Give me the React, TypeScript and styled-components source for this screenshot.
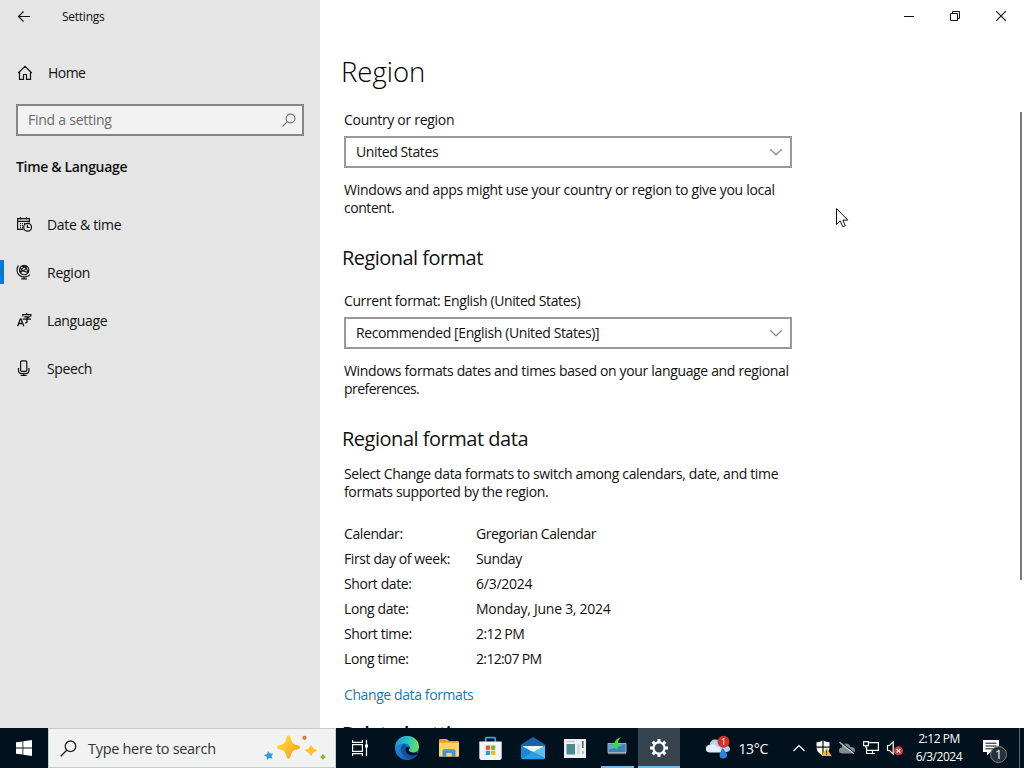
import React from "react";
import styled, { createGlobalStyle } from "styled-components";

interface TextProps {
  $track?: number;
}

const GlobalStyle = createGlobalStyle`
  * {
    box-sizing: border-box;
  }
  body {
    margin: 0;
    overflow: hidden;
    background-color: #fff;
    font-family: "Open Sans", "Noto Sans", sans-serif;
    font-size: 14px;
    color: #111;
  }
  h1, h2, p, dl, dt, dd {
    margin: 0;
    font-weight: 400;
  }
  svg {
    display: block;
    flex: none;
  }
`;

const Screen = styled.div`
  width: 1024px;
  height: 768px;
  display: flex;
  flex-direction: column;
  overflow: hidden;
`;

const SettingsWindow = styled.div`
  height: 728px;
  display: flex;
`;

const Label = styled.span<TextProps>`
  white-space: nowrap;
  letter-spacing: ${({ $track = 0 }) => $track}px;
`;

/* ---------- sidebar ---------- */

const Sidebar = styled.aside`
  width: 320px;
  background-color: #e5e5e5;
`;

const TitleBar = styled.div`
  height: 33px;
  padding-left: 17px;
  display: flex;
  align-items: center;
  gap: 31px;
  font-size: 12px;
`;

const HomeRow = styled.div`
  height: 32px;
  margin-top: 24px;
  padding-left: 17px;
  display: flex;
  align-items: center;
  gap: 15px;

  span {
    padding-bottom: 2px;
  }
`;

const SearchBox = styled.div`
  width: 288px;
  height: 32px;
  margin: 15px 16px 0;
  padding: 0 5px 2px 10px;
  border: 2px solid #858585;
  background-color: #f2f2f2;
  color: #6b6b6b;
  display: flex;
  align-items: center;
  justify-content: space-between;

  svg {
    margin-top: 2px;
  }
`;

const Category = styled.div`
  height: 65px;
  padding: 21px 16px 0;
  font-weight: 600;
  line-height: 20px;
`;

const NavItem = styled.div<{ $active?: boolean }>`
  height: 48px;
  display: flex;
  align-items: center;

  &::before {
    content: "";
    width: 4px;
    height: 24px;
    margin-right: 12px;
    margin-top: -2px;
    background-color: ${({ $active }) => ($active ? "#0078d7" : "transparent")};
  }
  svg {
    margin: -2px 15px 0 0;
  }
  span {
    padding-bottom: 2px;
  }
`;

/* ---------- content ---------- */

const Content = styled.main`
  flex: 1;
  display: flex;
  flex-direction: column;
`;

const Caption = styled.div`
  height: 32px;
  display: flex;
  justify-content: flex-end;
`;

const CaptionButton = styled.div`
  width: 46px;
  display: flex;
  align-items: center;
  justify-content: center;
`;

const Body = styled.div`
  flex: 1;
  display: flex;
  justify-content: space-between;
  min-height: 0;
`;

const Page = styled.div`
  width: 480px;
  padding-left: 24px;
  overflow: hidden;
`;

const PageTitle = styled.h1`
  margin: 20px 0 0 -3px;
  font-size: 27.5px;
  font-weight: 300;
  line-height: 40px;
  color: #000;
`;

const SectionTitle = styled.h2<{ $gap: number; $bold?: boolean }>`
  margin: ${({ $gap }) => $gap}px 0 0 -2px;
  font-size: 20px;
  line-height: 28px;
  font-weight: ${({ $bold }) => ($bold ? 600 : 400)};
`;

const Line = styled.p<{ $gap?: number }>`
  margin-top: ${({ $gap = 0 }) => $gap}px;
  height: 18px;
  line-height: 19px;
`;

const Select = styled.div`
  width: 448px;
  height: 32px;
  margin-top: 8px;
  padding: 0 7px 0 10px;
  border: 2px solid #999;
  display: flex;
  align-items: center;
  justify-content: space-between;

  span {
    padding-bottom: 2px;
  }
`;

const FormatList = styled.dl`
  margin-top: 21px;
`;

const FormatRow = styled.div`
  height: 25px;
  display: grid;
  grid-template-columns: 132px 1fr;
  line-height: 26px;
`;

const LinkLine = styled(Line)`
  color: #1a77ba;
`;

const ScrollThumb = styled.div`
  width: 2px;
  height: 468px;
  margin: 80px 2px 0 0;
  background-color: #7a7a7a;
`;

const Pointer = styled.svg`
  position: absolute;
  left: 836px;
  top: 207px;
`;

/* ---------- taskbar ---------- */

const Taskbar = styled.footer`
  height: 40px;
  background-color: #01111d;
  color: #fff;
  display: flex;
`;

const TaskSlot = styled.div<{ $width?: number; $active?: boolean }>`
  width: ${({ $width = 42 }) => $width}px;
  display: flex;
  align-items: center;
  justify-content: center;
  background-color: ${({ $active }) => ($active ? "#36444f" : "transparent")};
`;

const RunningSlot = styled(TaskSlot)<{ $line: number }>`
  background-image: linear-gradient(#76b9ed, #76b9ed);
  background-repeat: no-repeat;
  background-position: center bottom;
  background-size: ${({ $line }) => $line}px 2px;
`;

const TaskSearch = styled.div`
  width: 288px;
  padding: 0 8px 0 11px;
  border: 1px solid #c3ccd1;
  background-color: #f2f2f2;
  color: #333;
  font-size: 14.5px;
  display: flex;
  align-items: center;

  span {
    flex: 1;
    margin-left: 11px;
  }
`;

const Tray = styled.div`
  margin-left: auto;
  display: flex;
  align-items: center;
`;

const Weather = styled.div`
  display: flex;
  align-items: center;
  gap: 7px;
  margin-right: 24px;
`;

const TrayIcons = styled.div`
  display: flex;
  align-items: center;
  gap: 6px;
`;

const Clock = styled.div`
  width: 60px;
  margin: -1px 13px 0 5px;
  font-size: 12px;
  line-height: 18px;
  display: flex;
  flex-direction: column;
  align-items: center;
`;

const ShowDesktop = styled.div`
  width: 5px;
  height: 40px;
  margin-left: 10px;
  border-left: 1px solid #5b6670;
`;

/* ---------- icons ---------- */

interface IconProps {
  w?: number;
  h?: number;
  color?: string;
  stroke?: number;
  children: React.ReactNode;
}

const Icon: React.FC<IconProps> = ({ w = 16, h = 16, color = "#111", stroke = 1.2, children }) => (
  <svg width={w} height={h} viewBox={`0 0 ${w} ${h}`} fill="none" stroke={color} strokeWidth={stroke}>
    {children}
  </svg>
);

const BackIcon = () => (
  <Icon w={14} h={14}>
    <path d="M1.5 6.5H13M6.5 1.5l-5 5 5 5" />
  </Icon>
);

const HomeIcon = () => (
  <Icon>
    <path d="M1.2 8 8 1.3 14.8 8M2.5 7v7.4h4V9.5h3v4.9h4V7" />
  </Icon>
);

const FindIcon = () => (
  <Icon color="#777">
    <circle cx="9.5" cy="6.5" r="4.4" />
    <path d="M6.3 9.7 1.5 14.5" />
  </Icon>
);

const DateIcon = () => (
  <Icon>
    <path d="M7.5 13.4H1.6V2.6h11.8v4M1.6 5.3h11.8M4.5 1v2.5M10.5 1v2.5" />
    <path d="M4 7.7h5M4 9.7h4M4 11.6h3" strokeDasharray="1 1" />
    <circle cx="11.6" cy="11.2" r="3.9" />
    <path d="M11.4 8.8v2.7h2.2" />
  </Icon>
);

const RegionIcon = () => (
  <Icon stroke={1.1}>
    <circle cx="8.2" cy="6" r="4.700" />
    <path d="M4.200 3.800c2 3.200 5.200 4.800 8.600 4.200M4.900 9.400C4.500 6 6.900 2.600 10.800 2.300M5.700 2.100c3.600 0 6.200 3 6 6.600M3.600 7.200c2.700.9 6.900-1.500 7.700-4.800M2.400 1.400C.1 5 .7 9.400 3.600 11.500c3.200 2.200 7.600 1.800 10.400-.8M8 12.800v2M5.200 14.900h5.800" />
  </Icon>
);

const LanguageIcon = () => (
  <Icon stroke={1.3}>
    <path d="m1.6 14.3 2.8-7.5h.6l2.8 7.5M2.7 11.5h4M6.8 4.5V2.6h8v1.9M10.7 1v1.6M8.3 4.8h4.8l-2.2 1.6v3.7q0 .9-1.8.7M6.7 7.2h8.3" />
  </Icon>
);

const SpeechIcon = () => (
  <Icon>
    <rect x="4.6" y="0.8" width="6.2" height="10.6" rx="1.2" />
    <path d="M2.5 8v2.6q0 3.1 3.1 3.1h4.2q3.1 0 3.1-3.1V8M7.7 13.7v2M4.7 15.6h6" />
  </Icon>
);

const ChevronIcon = () => (
  <Icon w={14} h={8} color="#8a8a8a">
    <path d="m1.2 1.2 5.8 5.6 5.8-5.6" />
  </Icon>
);

const WindowsLogo = () => (
  <svg width="16" height="16" viewBox="0 0 16 16" fill="#fff">
    <path d="M0 2.3 6.5 1.4v6.2H0zM7.3 1.2 16 0v7.6H7.3zM0 8.4h6.5v6.2L0 13.7zM7.3 8.4H16V16l-8.7-1.2z" />
  </svg>
);

const Sparkles = () => (
  <svg width="64" height="30" viewBox="0 0 64 30">
    <defs>
      <linearGradient id="gold" x1="0" y1="0" x2="1" y2="1">
        <stop offset="0.2" stopColor="#ffd633" />
        <stop offset="1" stopColor="#f59a1c" />
      </linearGradient>
    </defs>
    <path d="M25.5 2.5q2 0 2.4 3.5 1 5.3 5.8 6 3.3.4 3.3 2.200t-3.300 2.200q-4.800.7-5.800 5.600-.4 3.500-2.400 3.500T23.100 22q-1-4.900-5.800-5.600-3.300-.4-3.300-2.200t3.300-2.200q4.800-.7 5.800-6 .4-3.500 2.400-3.500z" fill="url(#gold)" />
    <path d="M48 12.500q1.200 4 5.500 5-4.300 1-5.500 5-1.200-4-5.500-5 4.300-1 5.500-5z" fill="#fbc126" stroke="#fbc126" strokeLinejoin="round" />
    <path d="m5 18 2 2.600 3-.2-1.400 2.500 1 2.900-3.200-.8-2.500 2-.2-3.200-2.600-1.500 3-1.200z" fill="#279fda" />
    <circle cx="41.5" cy="4.8" r="2.1" fill="#e4733f" />
    <path d="M60 21.500q.6 1.800 2.300 2.400-1.700.6-2.300 2.400-.6-1.800-2.300-2.400 1.700-.6 2.300-2.400z" fill="#7bb83c" stroke="#7bb83c" />
  </svg>
);

const TaskViewIcon = () => (
  <Icon w={20} h={18} color="#fff">
    <path d="M1.600 1v2.400h9.800V1M1.600 17v-2.400h9.800V17M1.600 5.600h9.800v6.800H1.600zM15.500 1v16" />
    <rect x="14" y="5.5" width="3" height="3" fill="#fff" stroke="none" />
  </Icon>
);

const EdgeIcon = () => (
  <svg width="26" height="26" viewBox="0 0 26 26">
    <defs>
      <linearGradient id="edgeTop" x1="0" y1="0.4" x2="1" y2="0.5">
        <stop offset="0" stopColor="#1798df" />
        <stop offset="0.5" stopColor="#2bc3c2" />
        <stop offset="1" stopColor="#6de052" />
      </linearGradient>
      <linearGradient id="edgeLow" x1="0" y1="0" x2="1" y2="1">
        <stop offset="0" stopColor="#1b9de2" />
        <stop offset="1" stopColor="#0c55ab" />
      </linearGradient>
    </defs>
    <circle cx="13" cy="13" r="12" fill="url(#edgeLow)" />
    <path d="M1.2 11.5C2.2 5 7 1 13 1c7 0 12 5 12 10.5 0 4-3 6-6.300 6-3 0-4.700-1-3.400-2.700 2-3-.3-6.300-4.600-6.300-4.200 0-8 1.300-9.500 3z" fill="url(#edgeTop)" />
    <path d="M10.500 8.500c-3.800 1.500-4.700 6-2.600 10 2 3.800 6 5.500 9.600 5.500 2.500-.8 4.600-2.500 6-4.800-3.600 1.700-8 1.300-10.200-1-2-2-1.800-4.700-.2-6.400z" fill="#12509d" />
    <path d="M11.800 13c1-1.400 3-1.500 3.700-.5.300 1-.9 2-.7 3 .5 1.700 4 3 8.900 1.800l-.8 2.300c-3.500 1.500-7.500 1-9.700-1-1.600-1.600-2-3.900-1.400-5.600z" fill="#01111d" />
  </svg>
);

const FolderIcon = () => (
  <svg width="22" height="20" viewBox="0 0 22 20">
    <path d="M1 2q0-1 1-1h7l2 2h9q1 0 1 1v4H1z" fill="#e2a322" />
    <path d="M1 4.800h20V18q0 .8-.8.800H1.800Q1 18.800 1 18z" fill="#ffd568" />
    <path d="M4.500 18.800v-6q0-1.800 1.800-1.800h9.400q1.800 0 1.800 1.800v6h-3.800V15H8.300v3.800z" fill="#3d91d4" />
    <path d="M5 12h12" stroke="#66b9e8" />
  </svg>
);

const StoreIcon = () => (
  <svg width="24" height="25" viewBox="0 0 24 25">
    <path d="M6.700 6V2.700q0-1 1-1h7.600q1 0 1 1V6" fill="none" stroke="#32a6da" strokeWidth="1.7" />
    <path d="M.3 5.500h22.400v15.700q0 2.800-2.800 2.800H3.100Q.3 24 .3 21.200z" fill="#f4f5f6" />
    <path d="M6.800 9.500h4.300v4.300H6.800z" fill="#e9522c" />
    <path d="M12 9.500h4.300v4.300H12z" fill="#79b52a" />
    <path d="M6.800 14.700h4.300V19H6.800z" fill="#229ddd" />
    <path d="M12 14.700h4.300V19H12z" fill="#f7b519" />
  </svg>
);

const MailIcon = () => (
  <svg width="26" height="24" viewBox="0 0 26 24">
    <path d="M1 8.500 13 1l12 7.500v4H1z" fill="#1463ae" />
    <path d="M3 10h20v4l-10 5-10-5z" fill="#e9f5fd" />
    <path d="M1 9.500 13 16 1 22.500z" fill="#168ad8" />
    <path d="M25 9.500 13 16l12 6.500z" fill="#55c1f4" />
    <path d="m1 22.500 12-7 12 7q-.5.800-1.500.8h-21q-1 0-1.500-.8z" fill="#2b9fe6" />
  </svg>
);

const NewsIcon = () => (
  <svg width="23" height="19" viewBox="0 0 23 19">
    <path d="M0 0h22v19H0z" fill="#edf0f0" />
    <path d="M2.500 5h8.500v10.500H2.500z" fill="#4e8b91" />
    <path d="M2.500 2.500H11M13 6h3M13 8h3M13 10h3M13 12h3M13 14h3" stroke="#b7c4c4" />
    <path d="M18.800 2v7" stroke="#3a4347" strokeWidth="1.3" />
    <path d="M18 12h2v3h-2z" fill="#b5bfc0" />
  </svg>
);

const DriveIcon = () => (
  <svg width="20" height="22" viewBox="0 0 20 22">
    <path d="M1 6.500h18v9H1z" fill="#3c83bb" stroke="#a3b1bd" />
    <path d="M2 7.500h16l-16 5z" fill="#67a7cf" />
    <path d="M1 16.700h18" stroke="#8a959d" />
    <path d="M14 .5C10 1.300 7.500 3.500 7.300 7.300L5 7.600l4.300 5.200 4-5.800-2.600.2c0-2.500.9-4.500 3.300-6.700z" fill="#39dc3b" />
  </svg>
);

const GearIcon = () => (
  <svg width="20" height="20" viewBox="0 0 20 20" fill="none" stroke="#fff">
    <circle cx="10" cy="10" r="5.600" strokeWidth="2.2" />
    <path d="M10 1v3.500M10 15.500V19M1 10h3.500M15.500 10H19M3.600 3.600 6 6M14 14l2.400 2.400M3.600 16.400 6 14M14 6l2.400-2.400" strokeWidth="3" />
  </svg>
);

const BadgeDigit = styled.text`
  font-family: "Open Sans", sans-serif;
  stroke: none;
  fill: #fff;
  text-anchor: middle;
`;

const WeatherIcon = () => (
  <svg width="26" height="26" viewBox="0 0 26 26">
    <path d="M5.500 17Q1 17 1 13.500T4.500 10Q5.500 4.500 10 4.500q5 0 6 5 7-1 9 4 0 3.500-4 3.500z" fill="#b9d2f7" />
    <path d="M5.500 17.500Q1 17.500 1 14T4.500 10.500q4-3 7 1 5 .5 5 6z" fill="#e3edff" />
    <path d="M17.500 13q4.500 5 4.500 7.200 0 3.300-3.700 3.300t-3.700-3.300q0-2 2.900-7.200z" fill="#2a83df" />
    <circle cx="18.500" cy="6.700" r="6" fill="#d43027" />
    <BadgeDigit x="18.500" y="10" fontSize="9">1</BadgeDigit>
  </svg>
);

const TrayChevron = () => (
  <Icon w={17} h={8} color="#fff">
    <path d="M1.500 7 7 1.500 12.500 7" />
  </Icon>
);

const ShieldIcon = () => (
  <svg width="17" height="18" viewBox="0 0 17 18">
    <path d="M8 1.500q3 1.700 6.500 1.700v5Q14.500 13.500 8 16.500 1.500 13.500 1.500 8.200v-5Q5 3.200 8 1.500z" fill="#fff" />
    <path d="M8 1v16M1 8.200h14" stroke="#01111d" strokeWidth="1.2" />
    <path d="m11.500 8.500 5 8.500h-10z" fill="#f5b52e" />
    <path d="M11.500 11.500v3M11.500 15v1.200" stroke="#5a3a00" />
  </svg>
);

const CloudOffIcon = () => (
  <svg width="18" height="14" viewBox="0 0 18 14">
    <path d="M4.500 12.500Q1 12.500 1 9.500q0-2.700 2.700-3Q4.500 2.500 8 2.500q3.500 0 4.300 3.500 4.700-.2 4.700 3.200 0 3.300-3 3.300z" fill="#848c91" />
    <path d="m2.500 1 14.500 11.500" stroke="#01111d" strokeWidth="1.500" />
    <path d="M1.500 1.200 16 12.700" stroke="#c5cacd" strokeWidth="1.2" />
  </svg>
);

const NetworkIcon = () => (
  <Icon w={18} h={16} color="#fff">
    <path d="M6.500 2.600h9.900v7.800H4.600M4.600 7v6.500h8.400M10.500 10.500v3" />
    <path d="M1.600 1.600h4.800v4.100H1.600zM3.800 5.700v2" />
  </Icon>
);

const VolumeIcon = () => (
  <Icon w={18} h={16} color="#fff">
    <path d="M1.500 5.500h2l3.700-3.600v12.200L3.500 10.500h-2z" />
    <circle cx="12.500" cy="10.800" r="4.500" fill="#d83b44" stroke="none" />
    <path d="m10.700 9 3.600 3.600m0-3.600-3.600 3.600" stroke="#fff" />
  </Icon>
);

const ActionIcon = () => (
  <svg width="27" height="34" viewBox="0 0 27 34">
    <path d="M1 9h16v12H8.500L5 24.500V21H1z" fill="#fff" />
    <path d="M3.500 12.200h11M3.500 15h11M3.500 17.800h11" stroke="#01111d" />
    <circle cx="16.500" cy="23.500" r="8" fill="#273139" stroke="#77818a" />
    <BadgeDigit x="16.500" y="28" fontSize="12.5">1</BadgeDigit>
  </svg>
);

/* ---------- data ---------- */

const navItems = [
  { label: "Date & time", icon: <DateIcon />, track: -0.3 },
  { label: "Region", icon: <RegionIcon />, track: -0.25, active: true },
  { label: "Language", icon: <LanguageIcon />, track: -0.37 },
  { label: "Speech", icon: <SpeechIcon />, track: -0.37 },
];

const formats = [
  { name: "Calendar:", value: "Gregorian Calendar", track: -0.42 },
  { name: "First day of week:", value: "Sunday", track: -0.4 },
  { name: "Short date:", value: "6/3/2024", track: -0.25 },
  { name: "Long date:", value: "Monday, June 3, 2024", track: -0.27 },
  { name: "Short time:", value: "2:12 PM", track: -0.6 },
  { name: "Long time:", value: "2:12:07 PM", track: -0.65 },
];

const App: React.FC = () => {
  return (
    <Screen>
      <GlobalStyle />
      <SettingsWindow>
        <Sidebar>
          <TitleBar>
            <BackIcon />
            <Label $track={-0.25}>Settings</Label>
          </TitleBar>
          <HomeRow>
            <HomeIcon />
            <Label $track={-0.55}>Home</Label>
          </HomeRow>
          <SearchBox>
            <Label $track={-0.25}>Find a setting</Label>
            <FindIcon />
          </SearchBox>
          <Category>
            <Label $track={-0.33}>Time &amp; Language</Label>
          </Category>
          {navItems.map(({ label, icon, track, active }) => (
            <NavItem key={label} $active={active}>
              {icon}
              <Label $track={track}>{label}</Label>
            </NavItem>
          ))}
        </Sidebar>

        <Content>
          <Caption>
            <CaptionButton>
              <Icon w={10} h={10} stroke={1}>
                <path d="M0 5.5h10" />
              </Icon>
            </CaptionButton>
            <CaptionButton>
              <Icon w={10} h={10} stroke={1}>
                <path d="M.5 2.5h7v7h-7zM2.5 2.5v-2h7v7h-2" />
              </Icon>
            </CaptionButton>
            <CaptionButton>
              <Icon w={10} h={10} stroke={1.1}>
                <path d="m0 0 10 10M10 0 0 10" />
              </Icon>
            </CaptionButton>
          </Caption>
          <Body>
            <Page>
              <PageTitle>
                <Label>Region</Label>
              </PageTitle>
              <Line $gap={18}>
                <Label $track={-0.3}>Country or region</Label>
              </Line>
              <Select>
                <Label $track={-0.4}>United States</Label>
                <ChevronIcon />
              </Select>
              <Line $gap={12}>
                <Label $track={-0.28}>Windows and apps might use your country or region to give you local</Label>
              </Line>
              <Line>
                <Label $track={-0.45}>content.</Label>
              </Line>

              <SectionTitle $gap={28}>
                <Label $track={-0.54}>Regional format</Label>
              </SectionTitle>
              <Line $gap={19}>
                <Label $track={-0.39}>Current format: English (United States)</Label>
              </Line>
              <Select>
                <Label $track={-0.38}>Recommended [English (United States)]</Label>
                <ChevronIcon />
              </Select>
              <Line $gap={12}>
                <Label $track={-0.34}>Windows formats dates and times based on your language and regional</Label>
              </Line>
              <Line>
                <Label $track={-0.55}>preferences.</Label>
              </Line>

              <SectionTitle $gap={28}>
                <Label $track={-0.48}>Regional format data</Label>
              </SectionTitle>
              <Line $gap={11}>
                <Label $track={-0.36}>Select Change data formats to switch among calendars, date, and time</Label>
              </Line>
              <Line>
                <Label $track={-0.37}>formats supported by the region.</Label>
              </Line>
              <FormatList>
                {formats.map(({ name, value, track }) => (
                  <FormatRow key={name}>
                    <dt>
                      <Label $track={-0.4}>{name}</Label>
                    </dt>
                    <dd>
                      <Label $track={track}>{value}</Label>
                    </dd>
                  </FormatRow>
                ))}
              </FormatList>
              <LinkLine $gap={14}>
                <Label $track={-0.4}>Change data formats</Label>
              </LinkLine>
              <SectionTitle $gap={17} $bold>
                <Label $track={-1}>Related settings</Label>
              </SectionTitle>
            </Page>
            <ScrollThumb />
          </Body>
        </Content>
      </SettingsWindow>

      <Taskbar>
        <TaskSlot $width={48}>
          <WindowsLogo />
        </TaskSlot>
        <TaskSearch>
          <Icon w={17} h={17} color="#222" stroke={1.3}>
            <circle cx="10.5" cy="6.3" r="5.3" />
            <path d="M6.7 10.2.7 16.2" />
          </Icon>
          <Label $track={-0.3}>Type here to search</Label>
          <Sparkles />
        </TaskSearch>
        <TaskSlot $width={50}>
          <TaskViewIcon />
        </TaskSlot>
        <TaskSlot>
          <EdgeIcon />
        </TaskSlot>
        <TaskSlot>
          <FolderIcon />
        </TaskSlot>
        <TaskSlot>
          <StoreIcon />
        </TaskSlot>
        <TaskSlot>
          <MailIcon />
        </TaskSlot>
        <TaskSlot>
          <NewsIcon />
        </TaskSlot>
        <RunningSlot $line={33}>
          <DriveIcon />
        </RunningSlot>
        <RunningSlot $line={42} $active>
          <GearIcon />
        </RunningSlot>
        <Tray>
          <Weather>
            <WeatherIcon />
            <Label $track={-0.3}>13°C</Label>
          </Weather>
          <TrayIcons>
            <TrayChevron />
            <ShieldIcon />
            <CloudOffIcon />
            <NetworkIcon />
            <VolumeIcon />
          </TrayIcons>
          <Clock>
            <Label $track={-0.45}>2:12 PM</Label>
            <Label $track={-0.45}>6/3/2024</Label>
          </Clock>
          <ActionIcon />
          <ShowDesktop />
        </Tray>
      </Taskbar>

      <Pointer width="14" height="22" viewBox="0 0 14 22" fill="#fff" stroke="#111">
        <path d="M.5 1.5v16l3.700-3.500 2.600 5.700 2.500-1.100-2.500-5.500h5z" />
      </Pointer>
    </Screen>
  );
};

export default App;
